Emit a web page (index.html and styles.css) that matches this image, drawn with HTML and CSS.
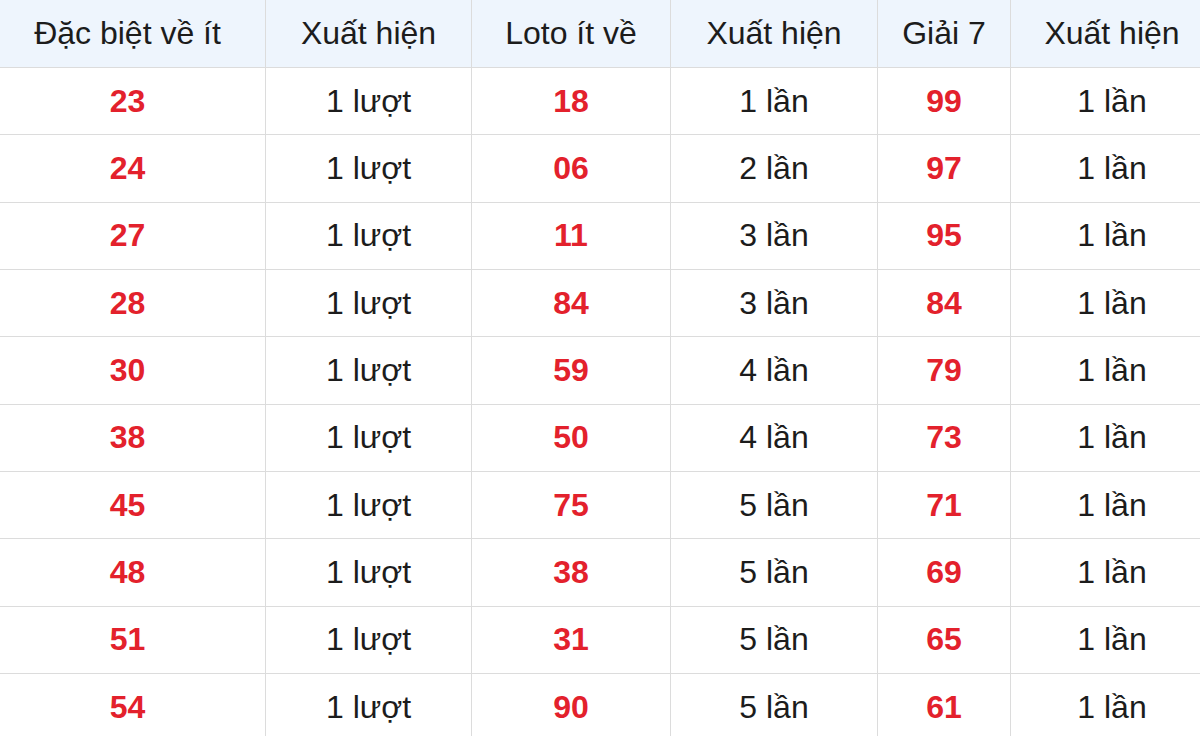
FILE: index.html
```html
<!DOCTYPE html>
<html lang="vi">
<head>
<meta charset="utf-8">
<title>Thống kê</title>
<link rel="stylesheet" href="styles.css">
</head>
<body>
<div class="wrap">
<table class="stats">
<colgroup>
<col class="c1"><col class="c2"><col class="c3"><col class="c4"><col class="c5"><col class="c6">
</colgroup>
<thead>
<tr><th>Đặc biệt về ít</th><th>Xuất hiện</th><th>Loto ít về</th><th>Xuất hiện</th><th>Giải 7</th><th>Xuất hiện</th></tr>
</thead>
<tbody>
<tr><td class="num">23</td><td>1 lượt</td><td class="num">18</td><td>1 lần</td><td class="num">99</td><td>1 lần</td></tr>
<tr><td class="num">24</td><td>1 lượt</td><td class="num">06</td><td>2 lần</td><td class="num">97</td><td>1 lần</td></tr>
<tr><td class="num">27</td><td>1 lượt</td><td class="num">11</td><td>3 lần</td><td class="num">95</td><td>1 lần</td></tr>
<tr><td class="num">28</td><td>1 lượt</td><td class="num">84</td><td>3 lần</td><td class="num">84</td><td>1 lần</td></tr>
<tr><td class="num">30</td><td>1 lượt</td><td class="num">59</td><td>4 lần</td><td class="num">79</td><td>1 lần</td></tr>
<tr><td class="num">38</td><td>1 lượt</td><td class="num">50</td><td>4 lần</td><td class="num">73</td><td>1 lần</td></tr>
<tr><td class="num">45</td><td>1 lượt</td><td class="num">75</td><td>5 lần</td><td class="num">71</td><td>1 lần</td></tr>
<tr><td class="num">48</td><td>1 lượt</td><td class="num">38</td><td>5 lần</td><td class="num">69</td><td>1 lần</td></tr>
<tr><td class="num">51</td><td>1 lượt</td><td class="num">31</td><td>5 lần</td><td class="num">65</td><td>1 lần</td></tr>
<tr><td class="num">54</td><td>1 lượt</td><td class="num">90</td><td>5 lần</td><td class="num">61</td><td>1 lần</td></tr>
</tbody>
</table>
</div>
</body>
</html>
```
FILE: styles.css
```css
html, body {
  margin: 0;
  padding: 0;
  background: #ffffff;
  overflow: hidden;
}
.wrap {
  width: 1224px;
  margin-left: -11px;
  margin-top: -1px;
}
.stats {
  width: 1224px;
  border-collapse: collapse;
  table-layout: fixed;
  font-family: "Liberation Sans", Arial, sans-serif;
  font-size: 32px;
  color: #1c1c1c;
}
.c1 { width: 276px; }
.c2 { width: 206px; }
.c3 { width: 199px; }
.c4 { width: 207px; }
.c5 { width: 133px; }
.c6 { width: 203px; }
.stats th,
.stats td {
  border: 1px solid #dcdcdc;
  height: 66.33px;
  padding: 0;
  text-align: center;
  vertical-align: middle;
  white-space: nowrap;
}
.stats th {
  font-weight: normal;
  background: #eef5fd;
  height: 67px;
}
.stats td.num {
  color: #e3212c;
  font-weight: bold;
}
```
